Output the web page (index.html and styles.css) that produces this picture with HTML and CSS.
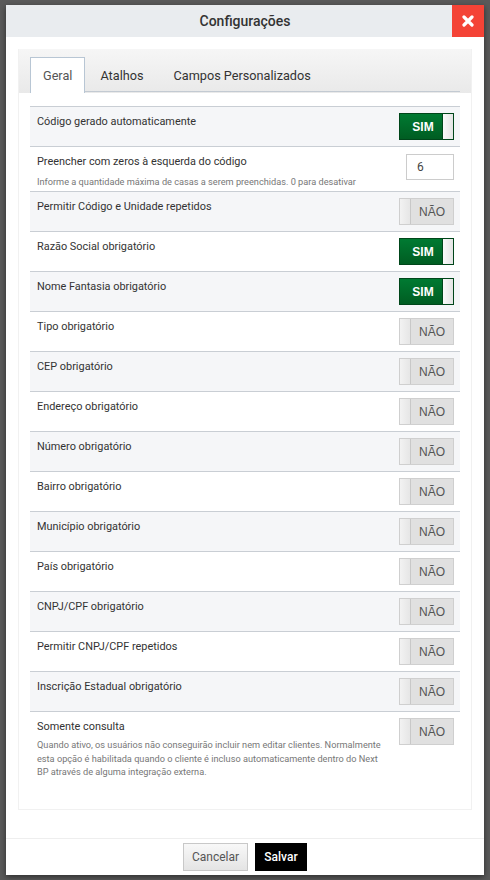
FILE: index.html
```html
<!DOCTYPE html>
<html lang="pt-BR">
<head>
<meta charset="utf-8">
<title>Configurações</title>
<link rel="stylesheet" href="styles.css">
</head>
<body>
<div class="modal">
  <div class="modal-header">
    <h1 class="modal-title">Configurações</h1>
    <button class="close-btn" aria-label="Fechar">
      <svg width="12" height="12" viewBox="0 0 12 12"><path d="M2 2 L10 10 M10 2 L2 10" stroke="#fff" stroke-width="3.2" stroke-linecap="round"/></svg>
    </button>
  </div>
  <div class="modal-body">
    <div class="panel">
      <div class="tabs">
        <div class="tab active">Geral</div>
        <div class="tab">Atalhos</div>
        <div class="tab">Campos Personalizados</div>
      </div>
      <div class="rows">
        <div class="row">
          <div class="info"><div class="label">Código gerado automaticamente</div></div>
          <div class="toggle on"><span class="t-text">SIM</span><span class="knob"></span></div>
        </div>
        <div class="row tall">
          <div class="info"><div class="label">Preencher com zeros à esquerda do código</div><div class="desc">Informe a quantidade máxima de casas a serem preenchidas. 0 para desativar</div></div>
          <div class="num-input">6</div>
        </div>
        <div class="row">
          <div class="info"><div class="label">Permitir Código e Unidade repetidos</div></div>
          <div class="toggle off"><span class="knob"></span><span class="t-text">NÃO</span></div>
        </div>
        <div class="row">
          <div class="info"><div class="label">Razão Social obrigatório</div></div>
          <div class="toggle on"><span class="t-text">SIM</span><span class="knob"></span></div>
        </div>
        <div class="row">
          <div class="info"><div class="label">Nome Fantasia obrigatório</div></div>
          <div class="toggle on"><span class="t-text">SIM</span><span class="knob"></span></div>
        </div>
        <div class="row">
          <div class="info"><div class="label">Tipo obrigatório</div></div>
          <div class="toggle off"><span class="knob"></span><span class="t-text">NÃO</span></div>
        </div>
        <div class="row">
          <div class="info"><div class="label">CEP obrigatório</div></div>
          <div class="toggle off"><span class="knob"></span><span class="t-text">NÃO</span></div>
        </div>
        <div class="row">
          <div class="info"><div class="label">Endereço obrigatório</div></div>
          <div class="toggle off"><span class="knob"></span><span class="t-text">NÃO</span></div>
        </div>
        <div class="row">
          <div class="info"><div class="label">Número obrigatório</div></div>
          <div class="toggle off"><span class="knob"></span><span class="t-text">NÃO</span></div>
        </div>
        <div class="row">
          <div class="info"><div class="label">Bairro obrigatório</div></div>
          <div class="toggle off"><span class="knob"></span><span class="t-text">NÃO</span></div>
        </div>
        <div class="row">
          <div class="info"><div class="label">Município obrigatório</div></div>
          <div class="toggle off"><span class="knob"></span><span class="t-text">NÃO</span></div>
        </div>
        <div class="row">
          <div class="info"><div class="label">País obrigatório</div></div>
          <div class="toggle off"><span class="knob"></span><span class="t-text">NÃO</span></div>
        </div>
        <div class="row">
          <div class="info"><div class="label">CNPJ/CPF obrigatório</div></div>
          <div class="toggle off"><span class="knob"></span><span class="t-text">NÃO</span></div>
        </div>
        <div class="row">
          <div class="info"><div class="label">Permitir CNPJ/CPF repetidos</div></div>
          <div class="toggle off"><span class="knob"></span><span class="t-text">NÃO</span></div>
        </div>
        <div class="row">
          <div class="info"><div class="label">Inscrição Estadual obrigatório</div></div>
          <div class="toggle off"><span class="knob"></span><span class="t-text">NÃO</span></div>
        </div>
        <div class="row last">
          <div class="info"><div class="label">Somente consulta</div><div class="desc long">Quando ativo, os usuários não conseguirão incluir nem editar clientes. Normalmente esta opção é habilitada quando o cliente é incluso automaticamente dentro do Next BP através de alguma integração externa.</div></div>
          <div class="toggle off"><span class="knob"></span><span class="t-text">NÃO</span></div>
        </div>
      </div>
    </div>
  </div>
  <div class="modal-footer">
    <button class="btn btn-cancel">Cancelar</button>
    <button class="btn btn-save">Salvar</button>
  </div>
</div>
</body>
</html>
```

FILE: styles.css
```css
* { box-sizing: border-box; }
html, body { margin: 0; padding: 0; }
body {
  background: #5a5a5a;
  font-family: Roboto, "Liberation Sans", Arial, sans-serif;
  width: 490px;
  height: 880px;
  overflow: hidden;
  padding: 5px 6px 0 6px;
}
.modal {
  width: 478px;
  height: 870px;
  background: #fff;
  display: flex;
  flex-direction: column;
  box-shadow: 0 2px 6px rgba(0,0,0,0.5);
}
.modal-header {
  height: 32px;
  background: #e9ecef;
  display: flex;
  align-items: center;
  justify-content: center;
  position: relative;
}
.modal-title {
  margin: 0;
  font-size: 14px;
  font-weight: 500;
  color: #333;
}
.close-btn {
  position: absolute;
  right: 0;
  top: 0;
  width: 32px;
  height: 32px;
  border: 0;
  padding: 0;
  background: #f44336;
  display: flex;
  align-items: center;
  justify-content: center;
}
.modal-body {
  flex: 1;
  padding: 12px 12px 0 12px;
}
.panel {
  border: 1px solid #f1f1f1;
  border-top: 0;
  height: 761px;
}
.tabs {
  height: 44px;
  padding: 8px 11px 0 11px;
  background: linear-gradient(#f6f6f6, #e9e9e9);
  display: flex;
  align-items: flex-end;
  position: relative;
}
.tabs::after {
  content: "";
  position: absolute;
  left: 11px;
  right: 11px;
  bottom: 1px;
  height: 1px;
  background: #c3cad2;
}
.tab {
  height: 36px;
  padding: 0 14px;
  display: flex;
  align-items: center;
  font-size: 12.7px;
  color: #333;
  border: 1px solid transparent;
  border-bottom: 0;
  position: relative;
  z-index: 1;
}
.tab.active {
  background: #fff;
  border-color: #b8c6d4;
  color: #555;
  padding: 0 12px;
}
.rows {
  padding: 13px 11px 0 11px;
}
.row {
  display: flex;
  justify-content: space-between;
  align-items: flex-start;
  border-top: 1px solid #c9ced4;
  height: 40px;
  padding: 6px 6px 0 7px;
}
.row:nth-child(odd) { background: #f5f6f8; }
.row.tall { height: 45px; }
.row.last { height: 80px; }
.info { padding-top: 2px; }
.label {
  font-size: 10.9px;
  color: #333;
  line-height: 14px;
}
.desc {
  font-size: 9.2px;
  color: #777;
  margin-top: 6px;
  line-height: 13.5px;
}
.desc.long {
  width: 350px;
  margin-top: 4px;
}
.toggle {
  width: 55px;
  height: 27px;
  display: flex;
  flex-shrink: 0;
  font-family: "Liberation Sans", Arial, sans-serif;
  font-size: 12px;
}
.toggle.on {
  background: linear-gradient(#007a32, #005d22);
  border: 1px solid #00461a;
}
.toggle.off {
  background: #e0e0e0;
  border: 1px solid #cfcfcf;
}
.t-text {
  flex: 1;
  display: flex;
  align-items: center;
  justify-content: center;
}
.toggle.on .t-text { color: #fff; font-weight: bold; padding-left: 4px; }
.toggle.off .t-text { color: #555; }
.knob {
  width: 11px;
  background: linear-gradient(to right, #fafafa, #e4e4e4);
}
.toggle.on .knob { border-left: 1px solid #00461a; }
.toggle.off .knob { border-right: 1px solid #c8c8c8; background: linear-gradient(to right, #f2f2f2, #e6e6e6); }
.num-input {
  width: 48px;
  height: 26px;
  margin-top: 1px;
  border: 1px solid #ccc;
  background: #fff;
  font-size: 12px;
  color: #444;
  padding-left: 10px;
  display: flex;
  align-items: center;
  flex-shrink: 0;
}
.modal-footer {
  height: 37px;
  border-top: 1px solid #eee;
  display: flex;
  justify-content: center;
  align-items: flex-start;
  gap: 7px;
  padding-top: 4px;
}
.btn {
  height: 28px;
  font-family: Roboto, "Liberation Sans", Arial, sans-serif;
  font-size: 12px;
  padding: 0;
}
.btn-cancel {
  width: 65px;
  background: linear-gradient(#f8f8f8, #e4e4e4);
  border: 1px solid #c8c8c8;
  color: #555;
}
.btn-save {
  width: 52px;
  background: #000;
  border: 1px solid #000;
  color: #fff;
  font-weight: 500;
}
```
